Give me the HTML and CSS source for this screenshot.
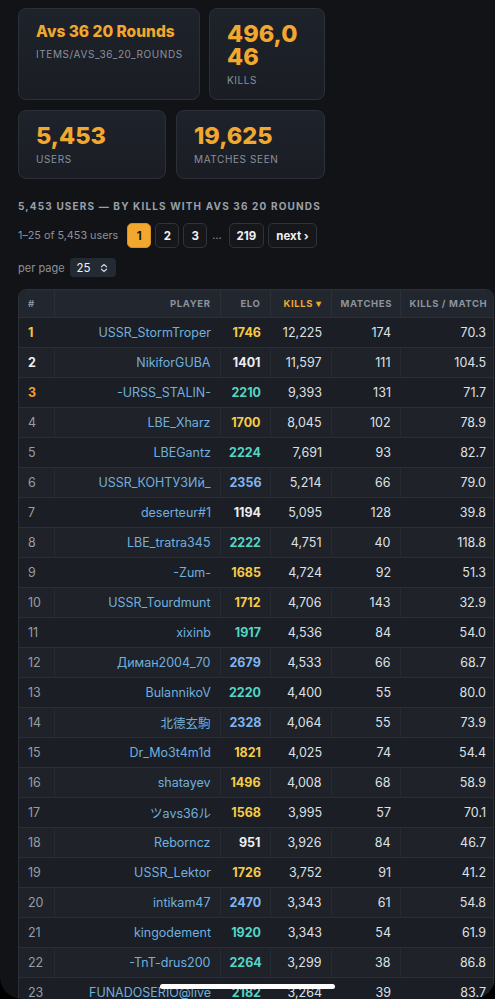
FILE: index.html
```html
<!DOCTYPE html>
<html lang="en">
  <head>
    <meta charset="UTF-8" />
    <meta name="viewport" content="width=device-width, initial-scale=1.0" />
    <title>Avs 36 20 Rounds - Item Stats</title>
    <link rel="stylesheet" href="styles.css">
  </head>
  <body>
    <div class="page">
      <div class="stats stats-top">
        <div class="card">
          <div class="card-title">Avs 36 20 Rounds</div>
          <div class="card-label">items/avs_36_20_rounds</div>
        </div>
        <div class="card">
          <div class="card-value wrap">496,046</div>
          <div class="card-label">kills</div>
        </div>
      </div>
      <div class="stats stats-bottom">
        <div class="card">
          <div class="card-value">5,453</div>
          <div class="card-label">users</div>
        </div>
        <div class="card">
          <div class="card-value">19,625</div>
          <div class="card-label">matches seen</div>
        </div>
      </div>

      <h2 class="section-title">5,453 users — by kills with Avs 36 20 Rounds</h2>

      <div class="pager">
        <span class="pager-info">1–25 of 5,453 users</span>
        <a class="page-btn active">1</a>
        <a class="page-btn">2</a>
        <a class="page-btn">3</a>
        <span class="pager-gap">…</span>
        <a class="page-btn">219</a>
        <a class="page-btn">next ›</a>
      </div>

      <div class="per-page">
        <span>per page</span>
        <div class="select">
          25
          <svg width="8" height="10" viewBox="0 0 8 10">
            <path d="M1.5 3.8 L4 1.5 L6.5 3.8 M1.5 6.2 L4 8.5 L6.5 6.2" fill="none" stroke="#c9ced6" stroke-width="1.3" stroke-linecap="round" stroke-linejoin="round"/>
          </svg>
        </div>
      </div>

      <div class="table-wrap">
        <table class="board">
          <colgroup>
            <col class="c-rank" />
            <col class="c-player" />
            <col class="c-elo" />
            <col class="c-kills" />
            <col class="c-matches" />
            <col class="c-kpm" />
          </colgroup>
          <thead>
            <tr>
              <th class="left">#</th>
              <th>Player</th>
              <th>Elo</th>
              <th class="sorted">Kills ▾</th>
              <th>Matches</th>
              <th>Kills / Match</th>
            </tr>
          </thead>
          <tbody id="rows"></tbody>
        </table>
      </div>
    </div>

    <div class="home-bar"></div>
    <div class="screen-edge"></div>

    <script>
      const rows = [
        ["USSR_StormTroper", 1746, "12,225", 174, "70.3"],
        ["NikiforGUBA", 1401, "11,597", 111, "104.5"],
        ["-URSS_STALIN-", 2210, "9,393", 131, "71.7"],
        ["LBE_Xharz", 1700, "8,045", 102, "78.9"],
        ["LBEGantz", 2224, "7,691", 93, "82.7"],
        ["USSR_КОНТУЗИй_", 2356, "5,214", 66, "79.0"],
        ["deserteur#1", 1194, "5,095", 128, "39.8"],
        ["LBE_tratra345", 2222, "4,751", 40, "118.8"],
        ["-Zum-", 1685, "4,724", 92, "51.3"],
        ["USSR_Tourdmunt", 1712, "4,706", 143, "32.9"],
        ["xixinb", 1917, "4,536", 84, "54.0"],
        ["Диман2004_70", 2679, "4,533", 66, "68.7"],
        ["BulannikoV", 2220, "4,400", 55, "80.0"],
        ["北德玄駒", 2328, "4,064", 55, "73.9"],
        ["Dr_Mo3t4m1d", 1821, "4,025", 74, "54.4"],
        ["shatayev", 1496, "4,008", 68, "58.9"],
        ["ツavs36ル", 1568, "3,995", 57, "70.1"],
        ["Reborncz", 951, "3,926", 84, "46.7"],
        ["USSR_Lektor", 1726, "3,752", 91, "41.2"],
        ["intikam47", 2470, "3,343", 61, "54.8"],
        ["kingodement", 1920, "3,343", 54, "61.9"],
        ["-TnT-drus200", 2264, "3,299", 38, "86.8"],
        ["FUNADOSERIO@live", 2182, "3,264", 39, "83.7"]
      ];

      // elo tiers -> colour class
      function eloClass(elo) {
        if (elo >= 2300) return "elo-blue";
        if (elo >= 1900) return "elo-teal";
        if (elo >= 1450) return "elo-gold";
        return "elo-plain";
      }

      const body = document.getElementById("rows");
      rows.forEach((r, i) => {
        const rank = i + 1;
        const rankClass = rank === 1 ? "rank gold" : rank === 2 ? "rank silver" : rank === 3 ? "rank bronze" : "rank";
        const tr = document.createElement("tr");
        tr.innerHTML =
          `<td class="${rankClass}">${rank}</td>` +
          `<td class="player">${r[0]}</td>` +
          `<td class="elo ${eloClass(r[1])}">${r[1]}</td>` +
          `<td>${r[2]}</td>` +
          `<td>${r[3]}</td>` +
          `<td>${r[4]}</td>`;
        body.appendChild(tr);
      });
    </script>
  </body>
</html>
```

FILE: styles.css
```css
* {
  margin: 0;
  padding: 0;
  box-sizing: border-box;
}
body {
  font-family: Inter, "Noto Sans", "Noto Sans CJK JP", sans-serif;
  background: #121316;
  color: #d9dde3;
  overflow: hidden;
}
.page {
  padding: 8px 18px 0;
}

.stats {
  display: grid;
  width: 307px;
  gap: 9px;
}
.stats-top {
  grid-template-columns: 182px 1fr;
}
.stats-bottom {
  grid-template-columns: 148px 1fr;
  gap: 10px;
  margin-top: 10px;
}
.card {
  background: linear-gradient(180deg, #1e222a 0%, #1a1d24 100%);
  border: 1px solid #2b3039;
  border-radius: 8px;
  padding: 12px 17px 13px;
}
.card-title {
  color: #f2a72e;
  font-size: 15.5px;
  font-weight: 800;
  line-height: 20px;
  margin-top: 1px;
}
.card-value {
  color: #f2a72e;
  font-size: 23.5px;
  font-weight: 800;
  line-height: 23px;
  margin-top: 1px;
}
.card-value.wrap {
  word-break: break-all;
}
.card-label {
  color: #8b919b;
  font-size: 10px;
  line-height: 12px;
  letter-spacing: 0.6px;
  text-transform: uppercase;
  margin-top: 6px;
}

.section-title {
  color: #9aa0a9;
  font-size: 10px;
  line-height: 12px;
  font-weight: 700;
  letter-spacing: 1.15px;
  text-transform: uppercase;
  margin-top: 21px;
}

.pager {
  display: flex;
  align-items: center;
  gap: 4px;
  margin-top: 11px;
  font-size: 10.8px;
}
.pager-info {
  color: #8b919b;
  margin-right: 5px;
}
.page-btn {
  display: inline-flex;
  align-items: center;
  justify-content: center;
  min-width: 24px;
  height: 25px;
  padding: 0 7px;
  border: 1px solid #2e333c;
  border-radius: 5px;
  background: #15171b;
  color: #eef0f3;
  font-size: 11.5px;
  font-weight: 700;
}
.page-btn.active {
  background: #f2a72e;
  border-color: #d8921f;
  color: #1a1409;
}
.pager-gap {
  color: #8b919b;
  padding: 0 3px 0 1px;
}

.per-page {
  display: flex;
  align-items: center;
  gap: 5px;
  margin-top: 10px;
  font-size: 11px;
  color: #8b919b;
}
.select {
  display: inline-flex;
  align-items: center;
  gap: 9px;
  height: 19px;
  padding: 0 8px 0 7px;
  background: #242a33;
  border-radius: 4px;
  color: #eef0f3;
  font-size: 11.5px;
}

.table-wrap {
  width: 476px;
  margin-top: 12px;
  border: 1px solid #2b3039;
  border-radius: 8px;
  overflow: hidden;
}
.board {
  width: 100%;
  border-collapse: collapse;
  table-layout: fixed;
  font-size: 12.5px;
}
.c-rank { width: 35px; }
.c-player { width: 166px; }
.c-elo { width: 50px; }
.c-kills { width: 61px; }
.c-matches { width: 69px; }
.c-kpm { width: 95px; }

.board th {
  background: #22262e;
  color: #8c939d;
  font-size: 9.5px;
  font-weight: 700;
  letter-spacing: 0.6px;
  text-transform: uppercase;
  text-align: right;
  white-space: nowrap;
  height: 27px;
  padding: 0 9px;
  border-left: 1px solid #2a2f38;
  border-bottom: 1px solid #2c313a;
}
.board th:first-child {
  border-left: none;
}
.board th.left {
  text-align: left;
}
.board th.sorted {
  color: #f2a72e;
}
.board td {
  height: 30px;
  padding: 0 9px;
  text-align: right;
  color: #dde1e6;
  border-bottom: 1px solid #2a2e36;
  white-space: nowrap;
  overflow: hidden;
}
.board tbody tr:nth-child(odd) td {
  background: #1b1e24;
}
.board tbody tr:nth-child(even) td {
  background: #1f2229;
  border-left: 1px solid #262a32;
}
.board tbody tr:nth-child(even) td:first-child {
  border-left: none;
}

.rank {
  text-align: left !important;
  color: #979da7 !important;
}
.rank.gold { color: #f5c73a !important; font-weight: 700; }
.rank.silver { color: #eef0f3 !important; font-weight: 700; }
.rank.bronze { color: #f0a030 !important; font-weight: 700; }

.player {
  color: #6fb0df !important;
}
.elo {
  font-weight: 700;
}
.elo-gold { color: #f7cc46 !important; }
.elo-teal { color: #52d6c6 !important; }
.elo-blue { color: #80b5f2 !important; }
.elo-plain { color: #eceef2 !important; }

.home-bar {
  position: fixed;
  left: 160px;
  bottom: 10px;
  width: 175px;
  height: 5px;
  border-radius: 3px;
  background: #fff;
}
.screen-edge {
  position: fixed;
  inset: 0;
  border-radius: 0 0 22px 22px;
  box-shadow: 0 0 0 30px #000;
  pointer-events: none;
}
```
